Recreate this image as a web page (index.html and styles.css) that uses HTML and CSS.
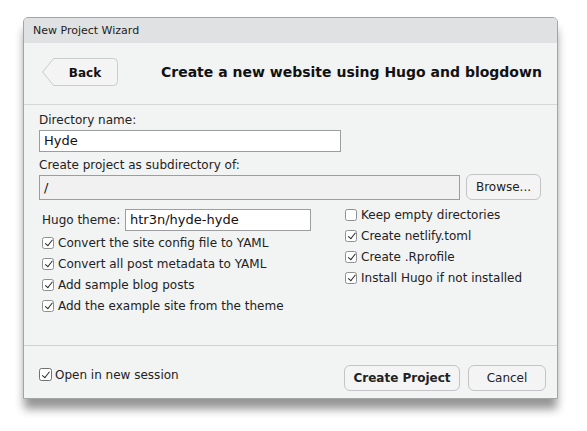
FILE: index.html
```html
<!DOCTYPE html>
<html>
<head>
<meta charset="utf-8">
<link rel="stylesheet" href="styles.css">
</head>
<body>
<div class="dialog">
  <div class="titlebar">New Project Wizard</div>
  <div class="header">
    <button class="back">
      <svg class="back-shape" width="76" height="28" viewBox="0 0 76 28"><path d="M11.5 0.5 H71.5 a4 4 0 0 1 4 4 V23.5 a4 4 0 0 1 -4 4 H11.5 L0.7 14 Z" fill="#f4f4f5" stroke="#cacbcc"/></svg>
      <span class="back-label">Back</span>
    </button>
    <div class="heading">Create a new website using Hugo and blogdown</div>
  </div>
  <div class="content">
    <div class="label">Directory name:</div>
    <div class="input name">Hyde</div>
    <div class="label second">Create project as subdirectory of:</div>
    <div class="dir-row">
      <div class="input dir">/</div>
      <button class="btn browse">Browse...</button>
    </div>
    <div class="options">
      <div class="col left">
        <div class="theme-row">
          <span class="theme-label">Hugo theme:</span>
          <div class="input theme">htr3n/hyde-hyde</div>
        </div>
        <label class="check"><span class="box on"></span>Convert the site config file to YAML</label>
        <label class="check"><span class="box on"></span>Convert all post metadata to YAML</label>
        <label class="check"><span class="box on"></span>Add sample blog posts</label>
        <label class="check"><span class="box on"></span>Add the example site from the theme</label>
      </div>
      <div class="col right">
        <label class="check"><span class="box"></span>Keep empty directories</label>
        <label class="check"><span class="box on"></span>Create netlify.toml</label>
        <label class="check"><span class="box on"></span>Create .Rprofile</label>
        <label class="check"><span class="box on"></span>Install Hugo if not installed</label>
      </div>
    </div>
  </div>
  <div class="footer">
    <label class="check session"><span class="box on big"></span>Open in new session</label>
    <div class="actions">
      <button class="btn primary">Create Project</button>
      <button class="btn cancel">Cancel</button>
    </div>
  </div>
</div>
</body>
</html>
```
FILE: styles.css
```css
html, body {
  margin: 0;
  padding: 0;
  background: #ffffff;
}
body {
  padding: 17px 0 0 23px;
  min-height: 431px;
  box-sizing: border-box;
  font-family: "DejaVu Sans", "Liberation Sans", sans-serif;
  color: #222;
}
.dialog {
  width: 533px;
  height: 380px;
  border: 1px solid #a3a4a6;
  border-radius: 5px 5px 0 0;
  background: #f2f3f3;
  box-shadow: 0 11px 10px -1px rgba(0, 0, 0, 0.42);
  display: flex;
  flex-direction: column;
}
.titlebar {
  height: 25px;
  flex: none;
  background: #e0e1e3;
  border-radius: 4px 4px 0 0;
  font-size: 11px;
  line-height: 25px;
  padding-left: 9px;
  color: #222;
}
.header {
  flex: none;
  border-bottom: 1px solid #d6d7d8;
  display: flex;
  align-items: center;
  padding: 0 0 6px 18px;
  box-sizing: border-box;
  height: 62px;
}
.back {
  position: relative;
  width: 76px;
  height: 28px;
  padding: 0;
  border: 0;
  background: none;
  font-family: inherit;
  margin-top: 3px;
}
.back-shape {
  position: absolute;
  left: 0;
  top: 0;
}
.back-label {
  position: relative;
  font-size: 12px;
  font-weight: bold;
  color: #111;
  padding-left: 10px;
}
.heading {
  margin-left: 43px;
  font-size: 14px;
  font-weight: bold;
  color: #111;
  margin-top: 3px;
}
.content {
  flex: 1;
  padding: 7px 0 0 15px;
}
.label {
  font-size: 12px;
  line-height: 16px;
  color: #222;
}
.label.second {
  margin-top: 5px;
}
.input {
  box-sizing: border-box;
  background: #fff;
  border: 1px solid #9c9d9f;
  font-size: 13px;
  color: #111;
  padding-left: 4px;
}
.input.name {
  width: 302px;
  height: 22px;
  line-height: 20px;
  margin-top: 2px;
}
.dir-row {
  display: flex;
  align-items: center;
  gap: 6px;
  margin-top: 2px;
}
.input.dir {
  width: 421px;
  height: 25px;
  line-height: 23px;
  background: #f1f1f1;
}
.btn {
  font-family: inherit;
  font-size: 12px;
  color: #222;
  background: #f4f4f5;
  border: 1px solid #c3c4c6;
  border-radius: 6px;
  height: 26px;
  padding: 0;
}
.browse {
  width: 75px;
  margin-top: -2px;
}
.options {
  display: flex;
  padding-left: 3px;
  margin-top: 8px;
}
.col {
  display: flex;
  flex-direction: column;
}
.col.left {
  width: 303px;
}
.col.right {
  margin-top: -4px;
}
.theme-row {
  display: flex;
  align-items: center;
  height: 23px;
  margin-bottom: 1px;
}
.theme-label {
  font-size: 12px;
  color: #222;
  width: 83px;
}
.input.theme {
  width: 186px;
  height: 22px;
  line-height: 20px;
}
.check {
  display: flex;
  align-items: center;
  height: 21px;
  font-size: 12px;
  color: #222;
}
.box {
  width: 12px;
  height: 12px;
  box-sizing: border-box;
  border: 1px solid #8e8f91;
  border-radius: 2.5px;
  background: #fff;
  margin-right: 4px;
  position: relative;
  flex: none;
}
.box.big {
  width: 13px;
  height: 13px;
  border-color: #6f7072;
  margin-right: 3px;
}
.box.on::after {
  content: "";
  position: absolute;
  left: 3.5px;
  top: 0.5px;
  width: 3px;
  height: 6.5px;
  border-right: 1.3px solid #222;
  border-bottom: 1.3px solid #222;
  transform: rotate(38deg);
}
.footer {
  height: 53px;
  flex: none;
  border-top: 1px solid #cfd0d1;
  display: flex;
  align-items: flex-end;
  justify-content: space-between;
  padding: 0 11px 7px 15px;
  box-sizing: border-box;
}
.check.session {
  margin-bottom: 6px;
}
.actions {
  display: flex;
  gap: 8px;
}
.primary {
  width: 116px;
  font-weight: bold;
}
.cancel {
  width: 78px;
}
```
